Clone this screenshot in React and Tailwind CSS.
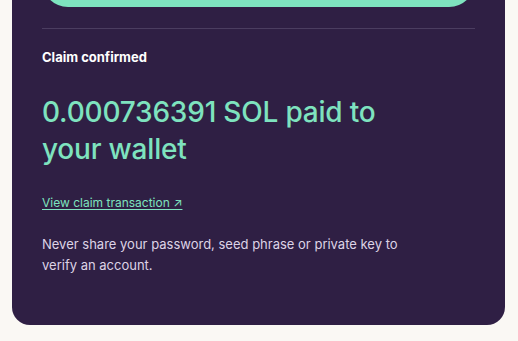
import React from 'react';

export default function App() {
  return (
    <div className="min-h-[341px] bg-[#faf8f4] px-[12px] pr-[13px] overflow-hidden" style={{ fontFamily: 'Inter, "Liberation Sans", sans-serif' }}>
      <div className="-mt-[75px] bg-[#2f1f44] rounded-b-[18px] px-[30px] pt-[30px] pb-[49px]">
        {/* CLAIM BUTTON (scrolled mostly out of view) */}
        <button aria-label="Claim" className="block w-full h-[52px] rounded-full bg-[#7ee3bf]" />

        <div className="mt-[21px] h-px bg-[#4b3d60]" />

        <div className="mt-[19px] text-[13px] font-bold text-white leading-[18px]">Claim confirmed</div>

        <h2 className="mt-[28px] text-[28px] font-medium leading-[37px] text-[#7ee3bf] tracking-[-0.2px]">
          0.000736391 SOL paid to
          <br />
          your wallet
        </h2>

        <a href="#" className="mt-[27px] inline-block text-[12px] leading-[16px] text-[#7ee3bf] underline underline-offset-2">
          View claim transaction ↗
        </a>

        <p className="mt-[21px] text-[13px] leading-[21px] text-[#ddd3e6] max-w-[360px]">
          Never share your password, seed phrase or private key to verify an account.
        </p>
      </div>
    </div>
  );
}
